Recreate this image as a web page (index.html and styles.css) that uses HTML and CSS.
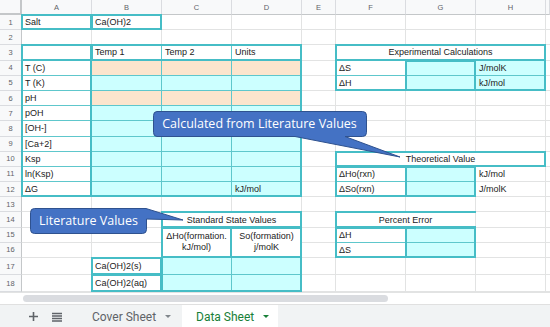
FILE: index.html
```html
<!DOCTYPE html>
<html lang="en">
<head>
    <meta charset="UTF-8">
    <title>Data Sheet</title>
    <link rel="stylesheet" href="styles.css">
</head>
<body>
<div class="app">
    <div class="sheet">
        <div class="cells">
            <!-- column headers -->
            <div class="corner"></div>
            <div class="ch">A</div><div class="ch">B</div><div class="ch">C</div><div class="ch">D</div>
            <div class="ch">E</div><div class="ch">F</div><div class="ch">G</div><div class="ch">H</div><div class="ch"></div>

            <div class="rh">1</div><div class="c">Salt</div><div class="c">Ca(OH)2</div><div class="c"></div><div class="c"></div><div class="c"></div><div class="c"></div><div class="c"></div><div class="c"></div><div class="c"></div>
            <div class="rh">2</div><div class="c"></div><div class="c"></div><div class="c"></div><div class="c"></div><div class="c"></div><div class="c"></div><div class="c"></div><div class="c"></div><div class="c"></div>
            <div class="rh">3</div><div class="c"></div><div class="c tt">Temp 1</div><div class="c tt">Temp 2</div><div class="c">Units</div><div class="c"></div><div class="c mid span3">Experimental Calculations</div><div class="c"></div>
            <div class="rh">4</div><div class="c tl">T (C)</div><div class="c pe"></div><div class="c pe"></div><div class="c pe"></div><div class="c"></div><div class="c tl">ΔS</div><div class="c cy"></div><div class="c cy">J/molK</div><div class="c"></div>
            <div class="rh">5</div><div class="c tl">T (K)</div><div class="c cy"></div><div class="c cy"></div><div class="c cy"></div><div class="c"></div><div class="c">ΔH</div><div class="c cy"></div><div class="c cy">kJ/mol</div><div class="c"></div>
            <div class="rh">6</div><div class="c tl">pH</div><div class="c pe"></div><div class="c pe"></div><div class="c pe"></div><div class="c"></div><div class="c"></div><div class="c"></div><div class="c"></div><div class="c"></div>
            <div class="rh">7</div><div class="c tl">pOH</div><div class="c cy"></div><div class="c cy"></div><div class="c cy"></div><div class="c"></div><div class="c"></div><div class="c"></div><div class="c"></div><div class="c"></div>
            <div class="rh">8</div><div class="c tl">[OH-]</div><div class="c cy"></div><div class="c cy"></div><div class="c cy"></div><div class="c"></div><div class="c"></div><div class="c"></div><div class="c"></div><div class="c"></div>
            <div class="rh">9</div><div class="c tl">[Ca+2]</div><div class="c cy"></div><div class="c cy"></div><div class="c cy"></div><div class="c"></div><div class="c"></div><div class="c"></div><div class="c"></div><div class="c"></div>
            <div class="rh">10</div><div class="c tl">Ksp</div><div class="c cy"></div><div class="c cy"></div><div class="c cy"></div><div class="c"></div><div class="c mid span3">Theoretical Value</div><div class="c"></div>
            <div class="rh">11</div><div class="c tl">ln(Ksp)</div><div class="c cy"></div><div class="c cy"></div><div class="c cy"></div><div class="c"></div><div class="c tl">ΔHo(rxn)</div><div class="c cy"></div><div class="c">kJ/mol</div><div class="c"></div>
            <div class="rh">12</div><div class="c">ΔG</div><div class="c cy"></div><div class="c cy"></div><div class="c cy">kJ/mol</div><div class="c"></div><div class="c">ΔSo(rxn)</div><div class="c cy"></div><div class="c">J/molK</div><div class="c"></div>
            <div class="rh">13</div><div class="c"></div><div class="c"></div><div class="c"></div><div class="c"></div><div class="c"></div><div class="c"></div><div class="c"></div><div class="c"></div><div class="c"></div>
            <div class="rh">14</div><div class="c"></div><div class="c"></div><div class="c mid span2">Standard State Values</div><div class="c"></div><div class="c mid span2">Percent Error</div><div class="c"></div><div class="c"></div>
            <div class="rh">15</div><div class="c"></div><div class="c"></div><div class="c mid wrap tall">ΔHo(formation. kJ/mol)</div><div class="c mid wrap tall">So(formation) j/molK</div><div class="c"></div><div class="c tl">ΔH</div><div class="c cy"></div><div class="c"></div><div class="c"></div>
            <div class="rh">16</div><div class="c"></div><div class="c"></div><div class="c"></div><div class="c">ΔS</div><div class="c cy"></div><div class="c"></div><div class="c"></div>
            <div class="rh">17</div><div class="c"></div><div class="c">Ca(OH)2(s)</div><div class="c cy"></div><div class="c cy"></div><div class="c"></div><div class="c"></div><div class="c"></div><div class="c"></div><div class="c"></div>
            <div class="rh">18</div><div class="c"></div><div class="c">Ca(OH)2(aq)</div><div class="c cy"></div><div class="c cy"></div><div class="c"></div><div class="c"></div><div class="c"></div><div class="c"></div><div class="c"></div>
        </div>

        <!-- thick teal borders, same grid laid over the cells -->
        <div class="frames">
            <div class="box b-a1"></div>
            <div class="box b-b1"></div>
            <div class="box b-a3"></div>
            <div class="box b-acol"></div>
            <div class="box b-temps"></div>
            <div class="box b-main"></div>
            <div class="box b-exp-head"></div>
            <div class="box b-exp"></div>
            <div class="box b-exp-g"></div>
            <div class="box b-theo-head"></div>
            <div class="box b-theo"></div>
            <div class="box b-theo-g"></div>
            <div class="box b-std-head"></div>
            <div class="box b-std-c"></div>
            <div class="box b-std-labels"></div>
            <div class="box b-std"></div>
            <div class="box b-salt-s"></div>
            <div class="box b-salt-aq"></div>
            <div class="box b-pct-head"></div>
            <div class="box b-pct"></div>
            <div class="box b-pct-g"></div>
        </div>
    </div>

    <!-- callouts -->
    <div class="callout callout-calc">
        <svg width="255" height="52" viewBox="0 0 255 52">
            <path d="M7 3.5 H212.5 Q216.5 3.5 216.5 7.5 V24.5 Q216.5 28.5 212.5 28.5 H195 L250 49 L145 28.5 H7 Q3.5 28.5 3.5 24.5 V7.5 Q3.5 3.5 7 3.5 Z" fill="#4472c4" stroke="#2f528f" stroke-width="1"/>
        </svg>
        <span class="callout-text">Calculated from Literature Values</span>
    </div>
    <div class="callout callout-lit">
        <svg width="160" height="30" viewBox="0 0 160 30">
            <path d="M6.5 2.5 H118 L155 14 L118.5 13 V23.5 Q118.5 27.5 114.5 27.5 H6.5 Q2.5 27.5 2.5 23.5 V6.5 Q2.5 2.5 6.5 2.5 Z" fill="#4472c4" stroke="#2f528f" stroke-width="1"/>
        </svg>
        <span class="callout-text">Literature Values</span>
    </div>

    <div class="scroll"><div class="thumb"></div></div>

    <div class="tabs">
        <div class="tab-tools">
            <svg class="icon" width="11" height="11" viewBox="0 0 11 11"><path d="M5.5 1 V10 M1 5.5 H10" stroke="#5f6368" stroke-width="1.6"/></svg>
            <svg class="icon" width="10" height="10" viewBox="0 0 10 10"><path d="M0 1.5 H10 M0 4 H10 M0 6.5 H10 M0 9 H10" stroke="#5f6368" stroke-width="1.3"/></svg>
        </div>
        <div class="tab">Cover Sheet <span class="caret"></span></div>
        <div class="tab active">Data Sheet <span class="caret"></span></div>
    </div>
</div>
</body>
</html>
```

FILE: styles.css
```css
/* page */
body {
    margin: 0;
    background: #fff;
    font-family: "Liberation Sans", Arial, sans-serif;
    color: #222;
    overflow: hidden;
}

.app {
    position: relative;
    width: 550px;
    height: 327px;
    overflow: hidden;
}

/* sheet: two grids stacked in one cell */
.sheet {
    display: grid;
}

.cells,
.frames {
    grid-area: 1 / 1;
    display: grid;
    grid-template-columns: 22px 70px 70px 70px 70px 34px 70px 70px 70px 4px;
    grid-template-rows: 15px repeat(16, 15.2px) 17px 17px;
}

.cells {
    font-size: 9px;
}

.frames {
    pointer-events: none;
}

.corner {
    background: #f8f9fa;
    border-right: 2px solid #c4c7c9;
    border-bottom: 2px solid #c4c7c9;
}

.ch {
    background: #f8f9fa;
    color: #5f6368;
    font-size: 7.5px;
    display: flex;
    align-items: center;
    justify-content: center;
    border-right: 1px solid #dadce0;
    border-bottom: 1px solid #c4c7c9;
}

.rh {
    background: #f8f9fa;
    color: #5f6368;
    font-size: 7.5px;
    display: flex;
    align-items: center;
    justify-content: center;
    border-right: 1px solid #c4c7c9;
    border-bottom: 1px solid #dadce0;
}

.c {
    display: flex;
    align-items: center;
    padding: 0 3px;
    white-space: nowrap;
    overflow: hidden;
    border-right: 1px solid #e2e3e3;
    border-bottom: 1px solid #e2e3e3;
}

.mid {
    justify-content: center;
    text-align: center;
}

.wrap {
    white-space: normal;
    line-height: 11px;
}

.span2 { grid-column: span 2; }
.span3 { grid-column: span 3; }
.tall { grid-row: span 2; }

/* fills */
.cy {
    background: #ccffff;
    border-color: #5ec7cc;
}

.pe {
    background: #fce5cd;
    border-color: #5ec7cc;
}

.tl { border-bottom-color: #5ec7cc; }
.tt { border-right-color: #5ec7cc; }

/* thick borders */
.box {
    border: 2px solid #46bdc6;
    margin: -1px 0 0 -1px;
}

.b-a1 { grid-area: 2 / 2 / 3 / 3; }
.b-b1 { grid-area: 2 / 3 / 3 / 4; }
.b-a3 { grid-area: 4 / 2 / 5 / 3; }
.b-acol { grid-area: 4 / 2 / 14 / 3; }
.b-temps { grid-area: 4 / 3 / 5 / 6; }
.b-main { grid-area: 4 / 2 / 14 / 6; }
.b-exp-head { grid-area: 4 / 7 / 5 / 10; }
.b-exp { grid-area: 4 / 7 / 7 / 10; }
.b-exp-g { grid-area: 5 / 8 / 7 / 9; }
.b-theo-head { grid-area: 11 / 7 / 12 / 10; }
.b-theo { grid-area: 12 / 7 / 14 / 9; }
.b-theo-g { grid-area: 12 / 8 / 14 / 9; }
.b-std-head { grid-area: 15 / 4 / 16 / 6; }
.b-std-c { grid-area: 16 / 4 / 18 / 5; }
.b-std-labels { grid-area: 16 / 4 / 18 / 6; }
.b-std { grid-area: 15 / 4 / 20 / 6; }
.b-salt-s { grid-area: 18 / 3 / 19 / 4; }
.b-salt-aq { grid-area: 19 / 3 / 20 / 4; }
.b-pct-head { grid-area: 15 / 7 / 16 / 9; border-right: none; }
.b-pct { grid-area: 16 / 7 / 18 / 9; }
.b-pct-g { grid-area: 16 / 8 / 18 / 9; }

/* callouts */
.callout {
    position: absolute;
    z-index: 2;
}

.callout svg {
    display: block;
}

.callout-calc {
    left: 150px;
    top: 108px;
}

.callout-calc .callout-text {
    position: absolute;
    left: 3px;
    top: 3px;
    width: 213px;
    height: 25px;
}

.callout-lit {
    left: 28px;
    top: 206px;
}

.callout-lit .callout-text {
    position: absolute;
    left: 2px;
    top: 2px;
    width: 117px;
    height: 25px;
}

.callout-text {
    display: flex;
    align-items: center;
    justify-content: center;
    color: #fff;
    font-family: "Open Sans", sans-serif;
    font-size: 12.5px;
    white-space: nowrap;
}

/* scrollbar */
.scroll {
    height: 12px;
    border-top: 1px solid #e2e3e3;
    box-sizing: border-box;
    padding: 2px 0 0 23px;
}

.thumb {
    width: 365px;
    height: 7px;
    background: #dadce0;
    border-radius: 4px;
}

/* sheet tabs */
.tabs {
    display: flex;
    height: 23px;
    background: #f1f3f4;
    border-top: 1px solid #e0e0e0;
    font-family: Roboto, sans-serif;
    font-size: 12px;
    color: #5f6368;
    white-space: nowrap;
}

.tab-tools {
    width: 78px;
    flex-shrink: 0;
    display: flex;
    align-items: center;
    justify-content: flex-end;
    gap: 13px;
    padding-right: 16px;
    box-sizing: border-box;
}

.icon {
    display: block;
}

.tab {
    display: flex;
    align-items: center;
    gap: 9px;
    padding: 0 0 0 14px;
    width: 104px;
    flex-shrink: 0;
    box-sizing: border-box;
}

.tab.active {
    width: 96px;
    background: #fff;
    color: #188038;
}

.caret {
    flex-shrink: 0;
    width: 0;
    height: 0;
    border-left: 3.5px solid transparent;
    border-right: 3.5px solid transparent;
    border-top: 3.5px solid #80868b;
}

.tab.active .caret {
    border-top-color: #188038;
}
```
